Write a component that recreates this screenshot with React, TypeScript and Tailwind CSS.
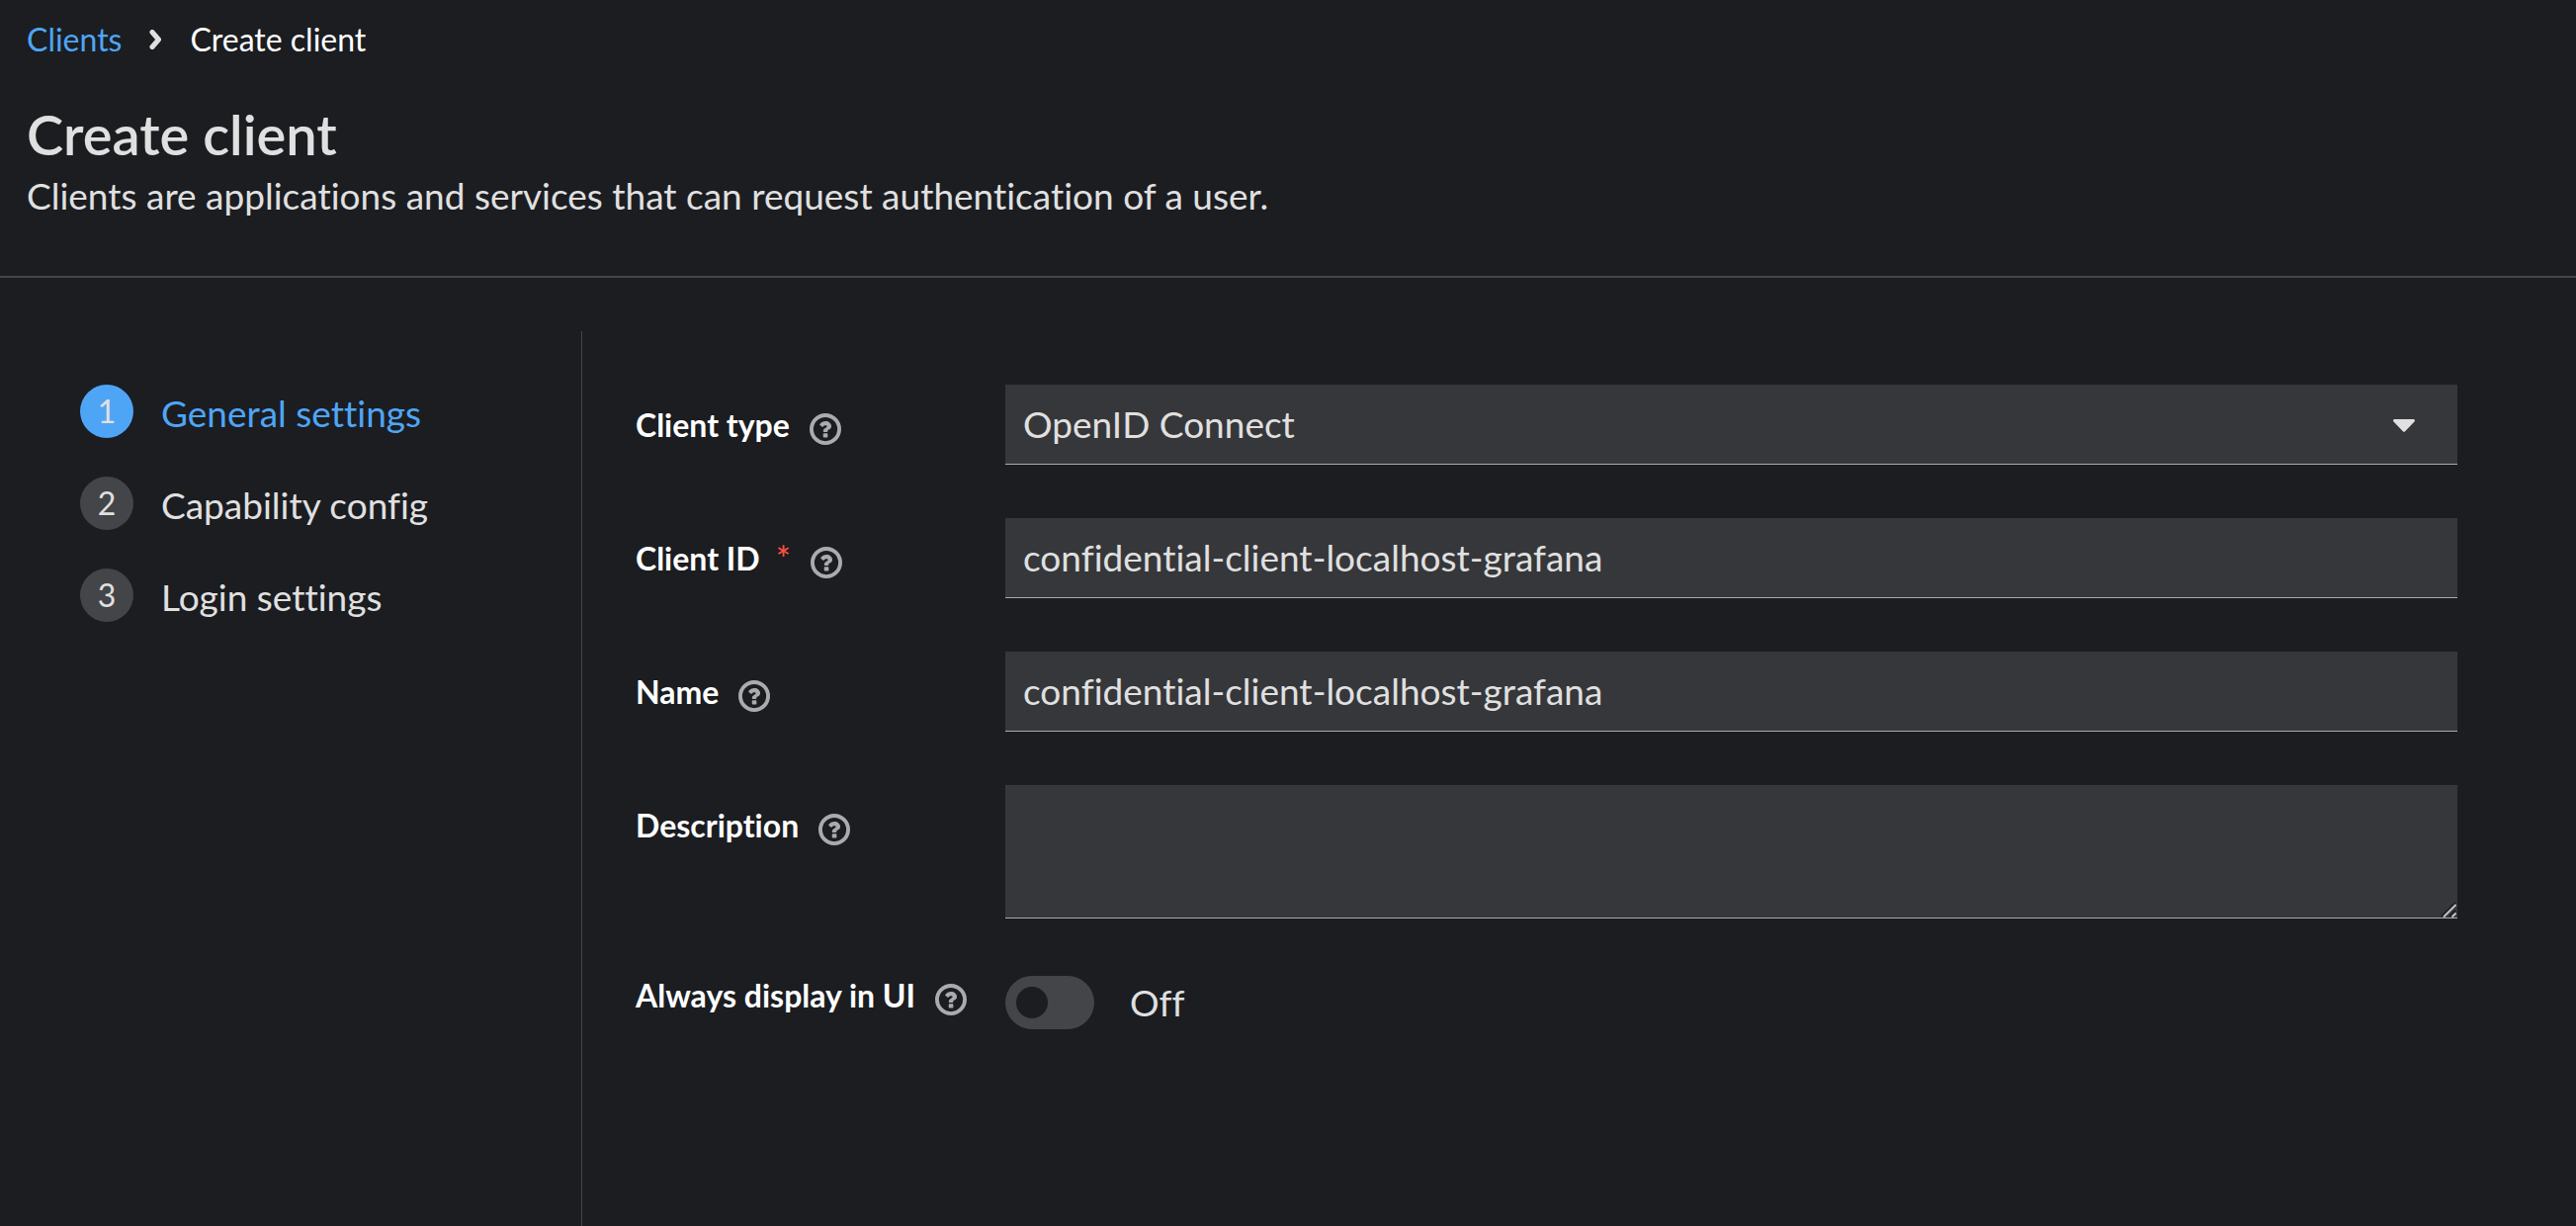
import { useState } from "react";
import type { ReactNode } from "react";

const steps = ["General settings", "Capability config", "Login settings"];

function HelpIcon({ label }: { label: string }) {
  return (
    <button type="button" aria-label={`More info for ${label}`} className="mt-2 ml-5 block shrink-0 text-[#aaabac]">
      <svg viewBox="0 0 512 512" className="block size-8" fill="currentColor" aria-hidden="true">
        <path
          fillRule="evenodd"
          d="M256 0a256 256 0 1 1 0 512a256 256 0 1 1 0-512zM256 62a194 194 0 1 0 0 388a194 194 0 1 0 0-388z"
        />
        <path d="M262 126c-44 0-74 18-96 49-4 5-3 12 2 16l35 27c5 4 12 3 17-2 11-14 20-22 38-22 13 0 24 7 24 18s-8 15-23 23c-17 10-38 22-38 48v7c0 7 5 12 12 12h48c7 0 12-5 12-12v-5c0-20 60-21 60-76 0-51-47-83-91-83z" />
        <rect x="220" y="322" width="74" height="68" rx="12" />
      </svg>
    </button>
  );
}

function Row({
  id,
  label,
  required = false,
  flush = false,
  children,
}: {
  id: string;
  label: string;
  required?: boolean;
  flush?: boolean;
  children: ReactNode;
}) {
  return (
    <div className="grid grid-cols-[374px_minmax(0,1fr)]">
      <div className={flush ? "flex h-12 items-center self-start" : "flex h-[81px] items-center self-start"}>
        <label htmlFor={id} className="flex h-12 text-[32px] leading-12 font-bold whitespace-nowrap text-white">
          {label}
          {required && <span className="ml-4 text-[36px] leading-12 font-normal text-[#fe5142]">*</span>}
        </label>
        <HelpIcon label={label} />
      </div>
      {children}
    </div>
  );
}

const field =
  "block w-full rounded-none border-b border-[#aaabac] bg-[#36373a] px-[18px] text-[37px] text-[#e0e0e0] outline-none";

export default function App() {
  const [type, setType] = useState("OpenID Connect");
  const [clientId, setClientId] = useState("confidential-client-localhost-grafana");
  const [name, setName] = useState("confidential-client-localhost-grafana");
  const [description, setDescription] = useState("");
  const [always, setAlways] = useState(false);

  return (
    <div className="flex min-h-screen flex-col bg-[#1b1d21] font-['Lato',sans-serif] text-[#e0e0e0] [font-variant-ligatures:none]">
      <header className="border-b-2 border-[#444548] px-[27px] pt-4 pb-[51px]">
        <nav aria-label="Breadcrumb">
          <ol className="flex h-12 items-center text-[32px] leading-12">
            <li>
              <a href="#clients" className="text-[#4fa5f5]">Clients</a>
            </li>
            <li className="ml-7 flex items-center">
              <svg viewBox="0 0 13 20" className="block h-5 w-[13px]" fill="none" stroke="#e0e0e0" strokeWidth="5" aria-hidden="true">
                <path d="M3 2.500L9.500 10L3 17.500" strokeLinejoin="round" strokeLinecap="round" />
              </svg>
              <span className="ml-7 text-white" aria-current="page">Create client</span>
            </li>
          </ol>
        </nav>
        <h1 className="mt-10 text-[56px] leading-16 font-semibold">Create client</h1>
        <p className="text-[37px] leading-[60px]">
          Clients are applications and services that can request authentication of a user.
        </p>
      </header>

      <div className="flex grow pt-[54px]">
        <nav aria-label="Wizard steps" className="w-[589px] shrink-0 border-r border-[#444548] py-[54px] pl-[81px]">
          <ol className="flex flex-col gap-[39px]">
            {steps.map((step, i) => (
              <li key={step}>
                <button type="button" className="flex items-center gap-7 text-left" aria-current={i === 0 ? "step" : undefined}>
                  <span
                    className={
                      i === 0
                        ? "flex size-[54px] items-center justify-center rounded-full bg-[#4fa5f5] text-[32px] leading-12"
                        : "flex size-[54px] items-center justify-center rounded-full bg-[#444548] text-[32px] leading-12"
                    }
                  >
                    {i + 1}
                  </span>
                  <span className={i === 0 ? "pt-1 text-[37px] leading-12 text-[#4fa5f5]" : "pt-1 text-[37px] leading-12"}>
                    {step}
                  </span>
                </button>
              </li>
            ))}
          </ol>
        </nav>

        <form className="flex min-w-0 grow flex-col gap-[54px] py-[54px] pr-[120px] pl-[54px]" onSubmit={(e) => e.preventDefault()}>
          <Row id="type" label="Client type">
            <div className="relative">
              <select id="type" value={type} onChange={(e) => setType(e.target.value)} className={`${field} h-[81px] appearance-none`}>
                <option>OpenID Connect</option>
                <option>SAML</option>
              </select>
              <svg viewBox="0 0 22 13" className="pointer-events-none absolute top-[35px] right-[43px] h-[13px] w-[22px]" fill="#e0e0e0" aria-hidden="true">
                <path d="M1.5 0h19c1.300 0 1.900 1.500 1 2.400L12.100 12.200a1.600 1.600 0 0 1-2.200 0L.5 2.400C-.4 1.500.2 0 1.500 0z" />
              </svg>
            </div>
          </Row>
          <Row id="client-id" label="Client ID" required>
            <input id="client-id" type="text" value={clientId} onChange={(e) => setClientId(e.target.value)} className={`${field} h-[81px] pb-0.5`} />
          </Row>
          <Row id="name" label="Name">
            <input id="name" type="text" value={name} onChange={(e) => setName(e.target.value)} className={`${field} h-[81px] pb-0.5`} />
          </Row>
          <Row id="description" label="Description">
            <div className="relative">
              <textarea
                id="description"
                value={description}
                onChange={(e) => setDescription(e.target.value)}
                className={`${field} h-[135px] resize-y [&::-webkit-resizer]:bg-transparent`}
              />
              <svg viewBox="0 0 16 16" className="pointer-events-none absolute right-px bottom-px size-4" fill="none" strokeWidth="2" aria-hidden="true">
                <path d="M1 15L15 1M9 15L15 9" stroke="#1b1d21" />
                <path d="M3 15.500L15.500 3M11.500 15.500L15.500 11.500" stroke="#c4c4c4" />
              </svg>
            </div>
          </Row>
          <Row id="always" label="Always display in UI" flush>
            <label className="mt-1 flex h-[54px] items-center">
              <input id="always" type="checkbox" role="switch" checked={always} onChange={(e) => setAlways(e.target.checked)} className="peer sr-only" />
              <span className="flex h-[54px] w-[90px] items-center rounded-full bg-[#444548] px-[11px] peer-checked:justify-end peer-checked:bg-[#4fa5f5]">
                <span className="block size-8 rounded-full bg-[#1b1d21]" />
              </span>
              <span className="ml-9 text-[37px] leading-12">{always ? "On" : "Off"}</span>
            </label>
          </Row>
        </form>
      </div>
    </div>
  );
}
